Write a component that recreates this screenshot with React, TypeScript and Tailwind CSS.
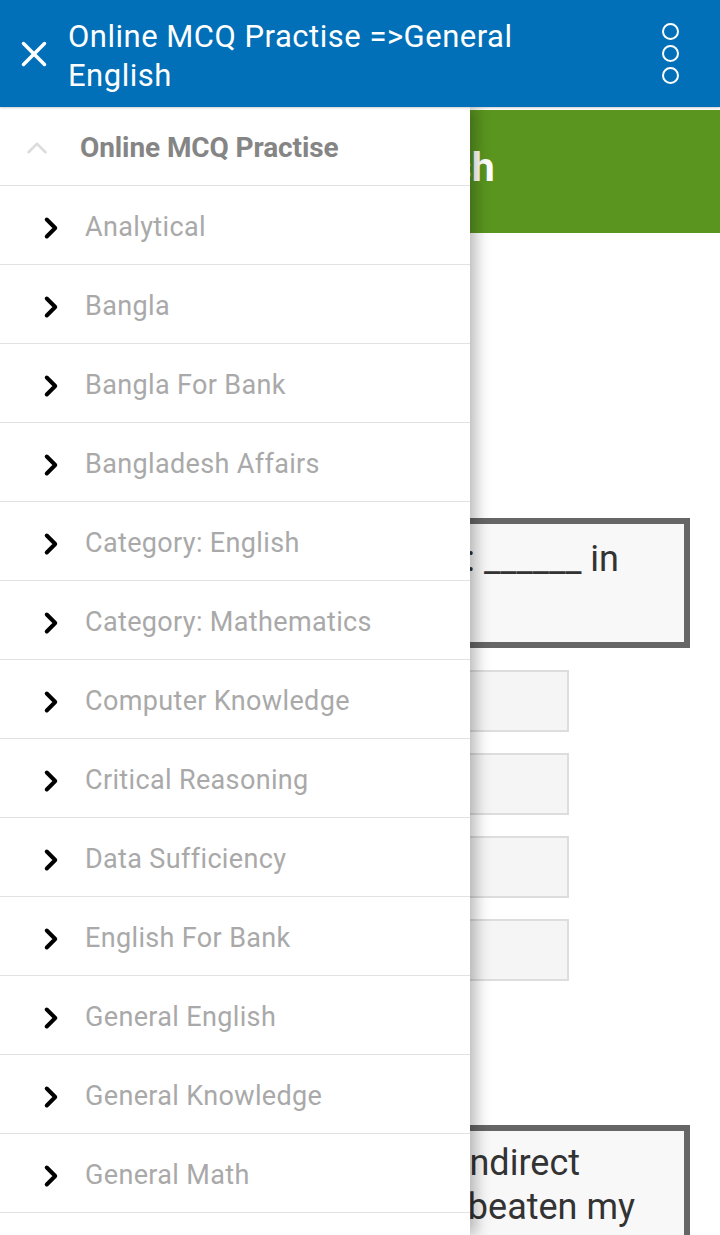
import { X, ChevronRight, ChevronUp } from 'lucide-react'

const categories = [
  'Analytical',
  'Bangla',
  'Bangla For Bank',
  'Bangladesh Affairs',
  'Category: English',
  'Category: Mathematics',
  'Computer Knowledge',
  'Critical Reasoning',
  'Data Sufficiency',
  'English For Bank',
  'General English',
  'General Knowledge',
  'General Math',
]

export default function App() {
  return (
    <div className="relative w-[720px] h-[1235px] overflow-hidden bg-white font-['Roboto',sans-serif]">
      {/* ── top bar ── */}
      <header className="relative z-20 h-[107px] bg-[#0170b8] flex items-center shadow-[0_1px_2px_rgba(0,0,0,0.2)]">
        <button className="w-[68px] h-full flex items-center justify-center text-white">
          <X className="w-[42px] h-[42px]" strokeWidth={2} />
        </button>
        <div className="flex-1">
          <h1 className="max-w-[470px] text-white text-[31px] leading-[39px] tracking-[0.5px] pt-[5px]">
            Online MCQ Practise =&gt;General English
          </h1>
        </div>
        <div className="w-[100px] flex flex-col items-center gap-[5px]">
          <span className="w-[17px] h-[17px] rounded-full border-2 border-white" />
          <span className="w-[17px] h-[17px] rounded-full border-2 border-white" />
          <span className="w-[17px] h-[17px] rounded-full border-2 border-white" />
        </div>
      </header>

      {/* ── page behind drawer ── */}
      <main className="pt-[3px]">
        <div className="h-[123px] bg-[#5a951f] flex items-center pl-[207px] pb-[8px]">
          <span className="text-white text-[41px] font-bold">General English</span>
        </div>
        <div className="px-[30px] pt-[285px]">
          <div className="h-[130px] border-[6px] border-[#666] bg-[#f8f8f8] pt-[12px] pr-[65px] flex flex-col items-end">
            <p className="text-[36px] leading-[46px] text-[#333] whitespace-nowrap">
              Fill in the blank: ______ in
            </p>
          </div>
          <div className="flex flex-col gap-[21px] mt-[22px] w-[539px]">
            {[0, 1, 2, 3].map(i => (
              <div key={i} className="h-[62px] border-2 border-[#dddddd] bg-[#f5f5f5]" />
            ))}
          </div>
          <div className="mt-[144px] h-[140px] border-[6px] border-b-0 border-[#666] bg-[#f8f8f8] pt-[10px] flex flex-col items-end">
            <p className="mr-[104px] text-[36px] leading-[44px] text-[#333] whitespace-nowrap">
              Change the narration into indirect
            </p>
            <p className="mr-[49px] text-[36px] leading-[44px] text-[#333] whitespace-nowrap">
              speech: He said, “I have beaten my
            </p>
          </div>
        </div>
      </main>

      {/* ── navigation drawer overlay ── */}
      <nav className="absolute left-0 top-[107px] bottom-0 w-[470px] bg-white z-10 shadow-[6px_0_14px_rgba(0,0,0,0.28)]">
        <div className="h-[79px] flex items-center border-b border-[#e2e2e2] pt-[3px]">
          <ChevronUp className="ml-[20px] w-[34px] h-[34px] text-[#dcdcdc]" strokeWidth={1.8} />
          <span className="ml-[26px] text-[28px] font-bold text-[#858585] tracking-[-0.1px]">
            Online MCQ Practise
          </span>
        </div>
        {categories.map(c => (
          <div key={c} className="h-[79px] flex items-center border-b border-[#e2e2e2] pt-[5px]">
            <ChevronRight className="ml-[34px] w-[34px] h-[34px] text-black" strokeWidth={2.8} />
            <span className="ml-[17px] text-[27px] tracking-[0.35px] text-[#a9a9a9]">{c}</span>
          </div>
        ))}
      </nav>
    </div>
  )
}
